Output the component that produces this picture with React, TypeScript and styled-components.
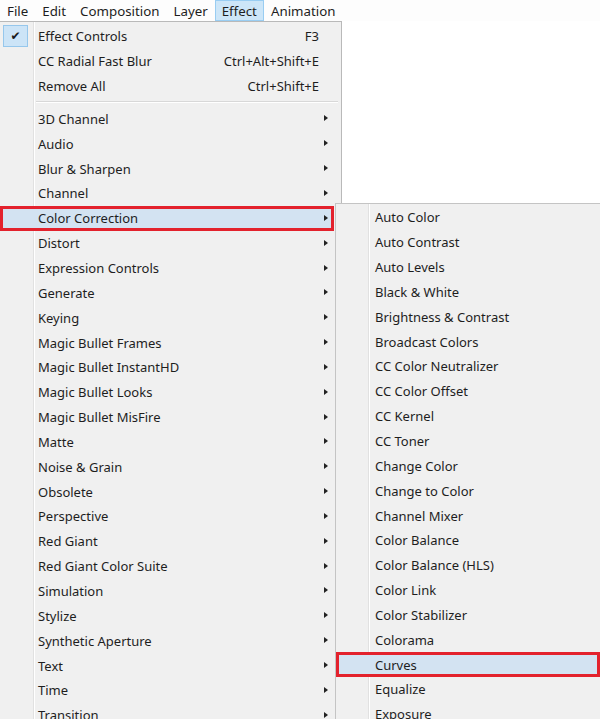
import styled, { createGlobalStyle } from 'styled-components'

const GlobalStyle = createGlobalStyle`
  html, body {
    margin: 0;
    padding: 0;
    background: #ffffff;
    overflow: hidden;
  }
  body {
    font-family: "Noto Sans", "Open Sans", sans-serif;
    font-size: 13px;
    color: #1e1e1e;
  }
`

const ROW = 24.85

const Page = styled.div`
  width: 600px;
  height: 719px;
  overflow: hidden;
  display: flex;
  flex-direction: column;
`

const MenuBar = styled.div`
  flex: none;
  height: 21px;
  display: flex;
  align-items: stretch;
  font-size: 13.3px;
  background: #fdfdfd;
`

const BarItem = styled.div<{ $active?: boolean }>`
  display: flex;
  align-items: center;
  padding: 0 6px;
  border: 1px solid ${p => (p.$active ? '#99cdf2' : 'transparent')};
  background: ${p => (p.$active ? '#cde6f8' : 'transparent')};
  box-sizing: border-box;
`

const Canvas = styled.div`
  position: relative;
  flex: 1;
  min-height: 0;
  overflow: hidden;
`

const Menu = styled.div`
  width: 342px;
  height: 100%;
  box-sizing: border-box;
  border: 1px solid #b9b9b9;
  border-left: none;
  border-bottom: none;
  padding-top: 1.6px;
  overflow: hidden;
  background: linear-gradient(
    to right,
    #f0f0f0 33px,
    #e1e1e1 33px,
    #e1e1e1 34px,
    #ffffff 34px,
    #ffffff 35px,
    #f0f0f0 35px
  );
`

const SubMenu = styled.div`
  position: absolute;
  left: 335px;
  top: 182px;
  right: -10px;
  bottom: 0;
  box-sizing: border-box;
  border: 1px solid #c4c4c4;
  border-bottom: none;
  padding-top: 1px;
  overflow: hidden;
  background: linear-gradient(
    to right,
    #f0f0f0 32px,
    #e1e1e1 32px,
    #e1e1e1 33px,
    #ffffff 33px,
    #ffffff 34px,
    #f0f0f0 34px
  );
`

const Row = styled.div<{ $hover?: boolean; $marked?: boolean; $indent: number; $width?: string }>`
  position: relative;
  height: ${ROW}px;
  width: ${p => p.$width || 'auto'};
  display: flex;
  align-items: center;
  box-sizing: border-box;
  padding-left: ${p => (p.$marked ? p.$indent - 3 : p.$indent)}px;
  background: ${p => (p.$hover ? '#d3e3f2' : 'transparent')};
  border: ${p => (p.$marked ? '3px solid #e3222d' : 'none')};
`

const Label = styled.span`
  flex: 1;
  white-space: nowrap;
`

const Shortcut = styled.span`
  margin-right: 22px;
  white-space: nowrap;
`

const Arrow = styled.span<{ $x: number }>`
  position: absolute;
  left: ${p => p.$x}px;
  top: 50%;
  margin-top: -3.5px;
  width: 0;
  height: 0;
  border-top: 3.5px solid transparent;
  border-bottom: 3.5px solid transparent;
  border-left: 4px solid #222;
`

const CheckBox = styled.div`
  position: absolute;
  left: 3px;
  top: 1px;
  width: 25px;
  height: 22px;
  box-sizing: border-box;
  border: 1px solid #96c7ec;
  background: #cce4f7;
  display: flex;
  align-items: center;
  justify-content: center;
  font-family: "DejaVu Sans", sans-serif;
  font-size: 12px;
  color: #1a1a1a;
`

const Separator = styled.div`
  height: 8.4px;
  display: flex;
  align-items: center;
  padding-left: 36px;
  padding-right: 3px;

  &::after {
    content: '';
    flex: 1;
    height: 1px;
    background: #d8d8d8;
    border-bottom: 1px solid #ffffff;
  }
`

const topItems = [
  { label: 'Effect Controls', key: 'F3', checked: true },
  { label: 'CC Radial Fast Blur', key: 'Ctrl+Alt+Shift+E' },
  { label: 'Remove All', key: 'Ctrl+Shift+E' },
]

const categories = [
  '3D Channel',
  'Audio',
  'Blur & Sharpen',
  'Channel',
  'Color Correction',
  'Distort',
  'Expression Controls',
  'Generate',
  'Keying',
  'Magic Bullet Frames',
  'Magic Bullet InstantHD',
  'Magic Bullet Looks',
  'Magic Bullet MisFire',
  'Matte',
  'Noise & Grain',
  'Obsolete',
  'Perspective',
  'Red Giant',
  'Red Giant Color Suite',
  'Simulation',
  'Stylize',
  'Synthetic Aperture',
  'Text',
  'Time',
  'Transition',
]

const colorItems = [
  'Auto Color',
  'Auto Contrast',
  'Auto Levels',
  'Black & White',
  'Brightness & Contrast',
  'Broadcast Colors',
  'CC Color Neutralizer',
  'CC Color Offset',
  'CC Kernel',
  'CC Toner',
  'Change Color',
  'Change to Color',
  'Channel Mixer',
  'Color Balance',
  'Color Balance (HLS)',
  'Color Link',
  'Color Stabilizer',
  'Colorama',
  'Curves',
  'Equalize',
  'Exposure',
]

const bar = ['File', 'Edit', 'Composition', 'Layer', 'Effect', 'Animation']

export default function App() {
  return (
    <Page>
      <GlobalStyle />
      <MenuBar>
        {bar.map(b => (
          <BarItem key={b} $active={b === 'Effect'}>
            {b}
          </BarItem>
        ))}
      </MenuBar>

      <Canvas>
        <Menu>
          {topItems.map(it => (
            <Row key={it.label} $indent={38}>
              {it.checked && <CheckBox>✔</CheckBox>}
              <Label>{it.label}</Label>
              <Shortcut>{it.key}</Shortcut>
            </Row>
          ))}
          <Separator />
          {categories.map(c => {
            const sel = c === 'Color Correction'
            return (
              <Row key={c} $indent={38} $hover={sel} $marked={sel} $width={sel ? '334px' : undefined}>
                <Label>{c}</Label>
                <Arrow $x={sel ? 321 : 324} />
              </Row>
            )
          })}
        </Menu>

        <SubMenu>
          {colorItems.map(c => {
            const sel = c === 'Curves'
            return (
              <Row key={c} $indent={39} $hover={sel} $marked={sel} $width={sel ? '264px' : undefined}>
                <Label>{c}</Label>
              </Row>
            )
          })}
        </SubMenu>
      </Canvas>
    </Page>
  )
}
